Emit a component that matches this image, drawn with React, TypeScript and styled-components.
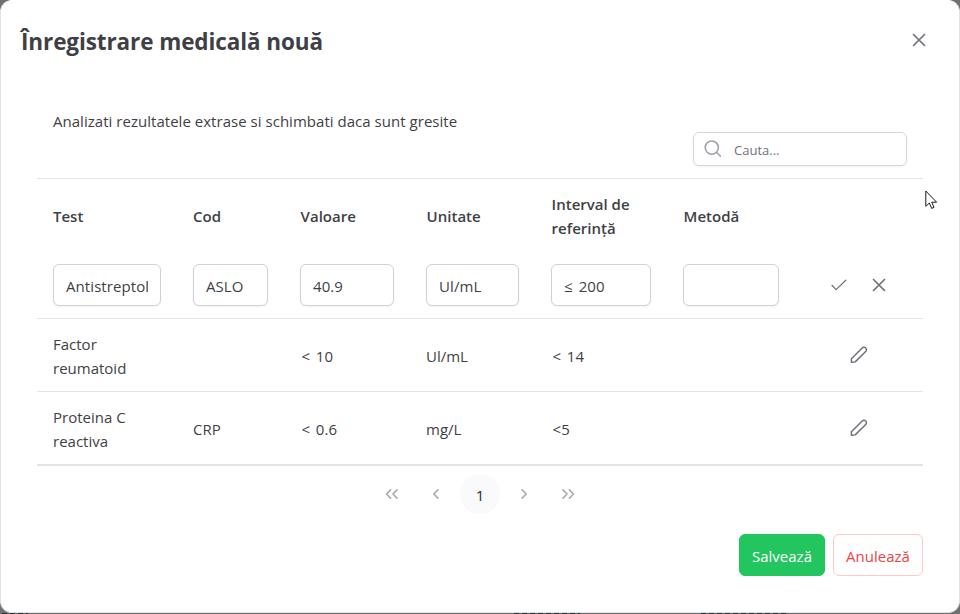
import React from "react";
import styled, { createGlobalStyle, css } from "styled-components";

const GlobalStyle = createGlobalStyle`
  * { box-sizing: border-box; }
  html, body, #root { height: 100%; margin: 0; }
  body {
    background: #707070;
    overflow: hidden;
    font-family: "Open Sans", "Noto Sans", sans-serif;
    font-size: 15px;
    line-height: 24px;
    color: #3f3f46;
  }
  button, input { font: inherit; color: inherit; letter-spacing: inherit; }
`;

const Stage = styled.div`
  position: relative;
  width: 960px;
  height: 614px;
`;

const Dialog = styled.section`
  width: 960px;
  height: 613px;
  background: #fff;
  border: 1px solid #e2e2e4;
  border-top-color: #fff;
  border-radius: 12px;
  display: flex;
  flex-direction: column;
`;

const Backdrop = styled.div`
  height: 1px;
  display: grid;
  grid-template-columns: 26px 486px 66px 121px 86px;
  padding-left: 2px;
`;

const Sliver = styled.span<{ $column: number }>`
  grid-column: ${({ $column }) => $column};
  background: repeating-linear-gradient(90deg, #1f2d38 0 5px, #65696c 5px 8px);
`;

const Header = styled.header`
  height: 79px;
  padding: 0 20px;
  display: flex;
  align-items: center;
  justify-content: space-between;
`;

const Title = styled.h1`
  margin: 2px 0 0;
  font-size: 22.5px;
  line-height: 32px;
  font-weight: 700;
  letter-spacing: -0.1px;
  white-space: nowrap;
`;

const IconButton = styled.button`
  width: 40px;
  height: 40px;
  padding: 0;
  border: 0;
  background: none;
  color: #71717a;
  display: flex;
  align-items: center;
  justify-content: center;
  flex: none;
`;

const HeaderButton = styled(IconButton)`
  margin-bottom: 2px;
`;

const Content = styled.div`
  padding: 28px 36px 0;
  display: flex;
  flex-direction: column;
`;

const Intro = styled.p`
  margin: 0;
  padding: 1px 16px 0;
  height: 24px;
  line-height: 24px;
  letter-spacing: 0.03px;
`;

const SearchBar = styled.div`
  display: flex;
  justify-content: flex-end;
  padding: 0 16px 12px;
`;

const SearchField = styled.label`
  width: 214px;
  height: 34px;
  padding: 0 10px;
  border: 1px solid #d1d5db;
  border-radius: 6px;
  box-shadow: 0 1px 2px rgba(18, 18, 23, 0.05);
  display: flex;
  align-items: center;
  gap: 12px;
  color: #a1a1aa;
`;

const SearchInput = styled.input`
  width: 150px;
  padding: 2px 0 0;
  border: 0;
  outline: 0;
  background: none;
  font-size: 13px;
  &::placeholder { color: #71717a; opacity: 1; }
`;

const Grid = styled.div`
  border-top: 1px solid #e4e4e7;
  border-bottom: 1px solid #e4e4e7;
`;

const Row = styled.div<{ $head?: boolean }>`
  display: grid;
  grid-template-columns: 140px 107px 126px 125px 132px 128px 128px;
  align-items: center;
  height: 73px;
  border-bottom: 1px solid #e4e4e7;
  ${({ $head }) => $head && css`
    border-bottom: 0;
    padding-bottom: 1px;
    font-weight: 600;
  `}
`;

const EditRow = styled(Row)`
  height: 67px;
`;

const Cell = styled.div<{ $text?: boolean; $measure?: boolean }>`
  padding: ${({ $text }) => ($text ? "2px 16px 0" : "0 16px")};
  ${({ $measure }) => $measure && css`
    padding-left: 17.5px;
    word-spacing: 1.5px;
    letter-spacing: 0.15px;
  `}
`;

const HeadCell = styled(Cell)<{ $nudge: boolean }>`
  padding: ${({ $nudge }) => ($nudge ? "1px 0 0 16.6px" : "1px 0 0 16px")};
`;

const Wide = styled.div`
  width: 110px;
`;

const Actions = styled.div`
  display: flex;
  justify-content: center;
`;

const CellInput = styled.input`
  display: block;
  width: 100%;
  height: 42px;
  padding: 1px 12px 0;
  border: 1px solid #d1d1d6;
  border-radius: 6px;
  outline: 0;
  background: #fff;
  box-shadow: 0 1px 2px rgba(18, 18, 23, 0.05);
  letter-spacing: 0.08px;
  word-spacing: 2px;
`;

const Paginator = styled.nav`
  height: 56px;
  display: flex;
  align-items: center;
  justify-content: center;
  gap: 4px;
`;

const PageButton = styled.button<{ $active?: boolean }>`
  width: 40px;
  height: 40px;
  padding: ${({ $active }) => ($active ? "2px 0 0" : "0")};
  border: 0;
  border-radius: 50%;
  background: ${({ $active }) => ($active ? "#f8fafc" : "none")};
  color: ${({ $active }) => ($active ? "#27272a" : "#a9a9b0")};
  display: flex;
  align-items: center;
  justify-content: center;
`;

const Footer = styled.footer`
  padding: 12px 36px 0;
  display: flex;
  justify-content: flex-end;
  gap: 8px;
`;

const Button = styled.button<{ $danger?: boolean }>`
  width: ${({ $danger }) => ($danger ? "90px" : "86px")};
  height: 42px;
  padding: 2px 0 0;
  border-radius: 6px;
  border: 1px solid ${({ $danger }) => ($danger ? "#fecaca" : "#22c55e")};
  background: ${({ $danger }) => ($danger ? "#fff" : "#22c55e")};
  color: ${({ $danger }) => ($danger ? "#ef4444" : "#fff")};
  white-space: nowrap;
`;

const Pointer = styled.svg`
  position: absolute;
  left: 925px;
  top: 190px;
`;

const CloseIcon = () => (
  <svg width="16" height="16" viewBox="0 0 16 16" fill="none" stroke="currentColor" strokeWidth="1.7" strokeLinecap="round">
    <path d="M2.5 2.5 13.5 13.5M13.5 2.5 2.5 13.5" />
  </svg>
);

const CheckIcon = () => (
  <svg width="16" height="16" viewBox="0 0 16 16" fill="none" stroke="currentColor" strokeWidth="1.25" strokeLinecap="round" strokeLinejoin="round">
    <path d="M1 8.3 5.1 12.6 14.8 3.2" />
  </svg>
);

const PencilIcon = () => (
  <svg width="18" height="18" viewBox="0 0 18 18" fill="none" stroke="currentColor" strokeWidth="1.5" strokeLinejoin="round">
    <path d="M1.4 16.3V12.7L12.2 2Q13.1 1.1 14.2 1.3Q15.4 1.5 16.1 2.4Q17 3.9 15.9 5.2L5.2 15.9Q3.3 16.5 1.4 16.3Z" />
  </svg>
);

const SearchIcon = () => (
  <svg width="18" height="18" viewBox="0 0 18 18" fill="none" stroke="currentColor" strokeWidth="1.6" strokeLinecap="round">
    <circle cx="7.8" cy="7.6" r="6.6" />
    <path d="M12.5 12.3 16.4 16.2" />
  </svg>
);

const Chevron = ({ double, flip }: { double?: boolean; flip?: boolean }) => (
  <svg width="14" height="14" viewBox="0 0 14 14" fill="none" stroke="currentColor" strokeWidth="1.6" strokeLinecap="round" strokeLinejoin="round">
    <g transform={flip ? "translate(14 0) scale(-1 1)" : undefined}>
      {double ? <path d="M5.6 2.9 1.5 7 5.6 11.1M12 2.9 7.9 7 12 11.1" /> : <path d="M8.9 2.9 4.8 7 8.9 11.1" />}
    </g>
  </svg>
);

const headings = ["Test", "Cod", "Valoare", "Unitate", "Interval de referință", "Metodă"];
const edited = ["Antistreptolizina", "ASLO", "40.9", "Ul/mL", "≤ 200", ""];
const records = [
  ["Factor reumatoid", "", "< 10", "Ul/mL", "< 14", ""],
  ["Proteina C reactiva", "CRP", "< 0.6", "mg/L", "<5", ""],
];

export default function App() {
  return (
    <Stage>
      <GlobalStyle />
      <Dialog role="dialog" aria-modal="true">
        <Header>
          <Title>Înregistrare medicală nouă</Title>
          <HeaderButton aria-label="Închide"><CloseIcon /></HeaderButton>
        </Header>
        <Content>
          <Intro>Analizati rezultatele extrase si schimbati daca sunt gresite</Intro>
          <SearchBar>
            <SearchField>
              <SearchIcon />
              <SearchInput placeholder="Cauta..." />
            </SearchField>
          </SearchBar>
          <Grid>
            <Row $head>
              {headings.map((heading, i) => (
                <HeadCell $nudge={i > 1} key={heading}><Wide>{heading}</Wide></HeadCell>
              ))}
            </Row>
            <EditRow>
              {edited.map((value, i) => (
                <Cell key={headings[i]}><CellInput defaultValue={value} /></Cell>
              ))}
              <Actions>
                <IconButton aria-label="Confirmă"><CheckIcon /></IconButton>
                <IconButton aria-label="Renunță"><CloseIcon /></IconButton>
              </Actions>
            </EditRow>
            {records.map((record) => (
              <Row key={record[0]}>
                {record.map((value, i) => (
                  <Cell $text $measure={value.startsWith("<")} key={headings[i]}>{value}</Cell>
                ))}
                <Actions>
                  <IconButton aria-label="Editează"><PencilIcon /></IconButton>
                </Actions>
              </Row>
            ))}
          </Grid>
          <Paginator>
            <PageButton aria-label="Prima"><Chevron double /></PageButton>
            <PageButton aria-label="Înapoi"><Chevron /></PageButton>
            <PageButton $active>1</PageButton>
            <PageButton aria-label="Înainte"><Chevron flip /></PageButton>
            <PageButton aria-label="Ultima"><Chevron double flip /></PageButton>
          </Paginator>
        </Content>
        <Footer>
          <Button>Salvează</Button>
          <Button $danger>Anulează</Button>
        </Footer>
      </Dialog>
      <Backdrop>
        <Sliver $column={1} />
        <Sliver $column={3} />
        <Sliver $column={5} />
      </Backdrop>
      <Pointer width="13" height="20" viewBox="0 0 13 20">
        <path d="M.8 1V16.4L4.3 13 6.7 18.4 9 17.4 6.7 12.2H11.6Z" fill="#fff" stroke="#18181b" strokeWidth="1" />
      </Pointer>
    </Stage>
  );
}
